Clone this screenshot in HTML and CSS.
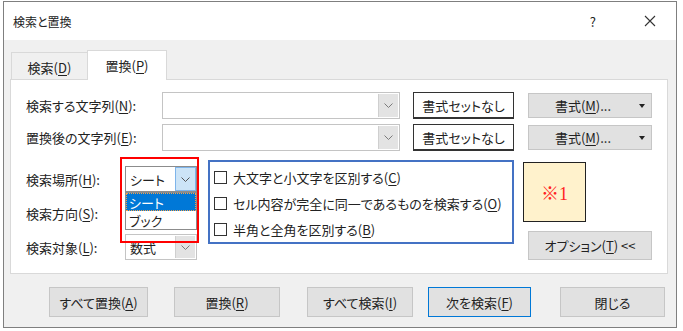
FILE: index.html
```html
<!DOCTYPE html>
<html lang="ja">
<head>
  <meta charset="UTF-8" />
  <title>検索と置換</title>
  <link rel="stylesheet" href="styles.css">
</head>
<body>
  <div class="window">
    <div class="titlebar">
      <span class="title">検索と置換</span>
      <span class="help">?</span>
      <svg class="close" width="12" height="12" viewBox="0 0 12 12"><path d="M1 1L11 11M11 1L1 11" stroke="#333" stroke-width="1.1" fill="none"/></svg>
    </div>
    <div class="body">
      <div class="tabs">
        <div class="tab">検索(<u>D</u>)</div>
        <div class="tab active">置換(<u>P</u>)</div>
      </div>
      <div class="panel">
        <div class="find-grid">
          <label>検索する文字列(<u>N</u>):</label>
          <div class="combo wide">
            <span class="value"></span>
            <span class="drop"><svg width="9" height="5" viewBox="0 0 9 5"><polyline points="0.5,0.5 4.5,4.5 8.5,0.5" stroke="#7a7a7a" fill="none"/></svg></span>
          </div>
          <div class="fmt-none">書式セットなし</div>
          <div class="btn fmt"><span>書式(<u>M</u>)...</span><span class="tri"></span></div>

          <label>置換後の文字列(<u>E</u>):</label>
          <div class="combo wide">
            <span class="value"></span>
            <span class="drop"><svg width="9" height="5" viewBox="0 0 9 5"><polyline points="0.5,0.5 4.5,4.5 8.5,0.5" stroke="#7a7a7a" fill="none"/></svg></span>
          </div>
          <div class="fmt-none">書式セットなし</div>
          <div class="btn fmt"><span>書式(<u>M</u>)...</span><span class="tri"></span></div>
        </div>

        <div class="opt-area">
          <div class="opt-form">
            <label>検索場所(<u>H</u>):</label>
            <div class="combo small open">
              <span class="value">シート</span>
              <span class="drop"><svg width="9" height="5" viewBox="0 0 9 5"><polyline points="0.5,0.5 4.5,4.5 8.5,0.5" stroke="#555" fill="none"/></svg></span>
            </div>
            <label>検索方向(<u>S</u>):</label>
            <div class="combo small">
              <span class="value"></span>
              <span class="drop"></span>
            </div>
            <label>検索対象(<u>L</u>):</label>
            <div class="combo small">
              <span class="value">数式</span>
              <span class="drop"><svg width="9" height="5" viewBox="0 0 9 5"><polyline points="0.5,0.5 4.5,4.5 8.5,0.5" stroke="#7a7a7a" fill="none"/></svg></span>
            </div>
          </div>

          <div class="checks">
            <div class="check"><span class="box"></span>大文字と小文字を区別する(<u>C</u>)</div>
            <div class="check"><span class="box"></span>セル内容が完全に同一であるものを検索する(<u>O</u>)</div>
            <div class="check"><span class="box"></span>半角と全角を区別する(<u>B</u>)</div>
          </div>

          <div class="side">
            <div class="note">※1</div>
            <div class="btn opts">オプション(<u>T</u>) &lt;&lt;</div>
          </div>

          <div class="dropdown-list">
            <div class="item selected">シート</div>
            <div class="item">ブック</div>
          </div>
          <div class="mark-red"></div>
        </div>
      </div>

      <div class="actions">
        <div class="btn act replace-all">すべて置換(<u>A</u>)</div>
        <div class="btn act replace">置換(<u>R</u>)</div>
        <div class="btn act find-all">すべて検索(<u>I</u>)</div>
        <div class="btn act find-next">次を検索(<u>F</u>)</div>
        <div class="btn act close-btn">閉じる</div>
      </div>
    </div>
  </div>
</body>
</html>
```

FILE: styles.css
```css
body {
  margin: 0;
  background: #fff;
  font-family: "Noto Sans CJK JP", "Noto Sans", sans-serif;
  font-feature-settings: "palt";
  font-size: 13px;
  color: #222;
}

u {
  text-underline-offset: 2px;
}

.window {
  margin: 1px 0 0 3px;
  width: 674px;
  height: 327px;
  box-sizing: border-box;
  border: 1px solid #7f7f7f;
  display: flex;
  flex-direction: column;
}

.titlebar {
  height: 38px;
  flex: none;
  background: #fff;
  display: flex;
  align-items: center;
  padding-left: 9px;
  font-size: 12px;
}

.help {
  margin-left: auto;
  margin-right: 48px;
  font-size: 13px;
}

.close {
  margin-right: 20px;
}

.body {
  flex: 1;
  background: #f0f0f0;
  padding: 10px 8px 0 6px;
}

.tabs {
  display: flex;
  align-items: flex-end;
  height: 29px;
  margin-left: 1px;
  position: relative;
  z-index: 1;
}

.tab {
  width: 77px;
  height: 27px;
  box-sizing: border-box;
  border: 1px solid #d9d9d9;
  border-bottom: none;
  display: flex;
  align-items: center;
  justify-content: center;
  padding-top: 2px;
}

.tab.active {
  width: 80px;
  height: 30px;
  margin-bottom: -1px;
  margin-left: -1px;
  background: #fff;
  padding-top: 0;
}

.panel {
  background: #fff;
  border: 1px solid #d9d9d9;
  height: 195px;
  box-sizing: border-box;
  padding: 12px 0 0 15px;
}

.find-grid {
  display: grid;
  grid-template-columns: 136px 238px 114px 138px;
  grid-auto-rows: 27px;
  row-gap: 5px;
  align-items: center;
}

.combo {
  height: 27px;
  box-sizing: border-box;
  background: #fff;
  border: 1px solid #c4c4c4;
  display: flex;
}

.combo .value {
  flex: 1;
  padding-left: 4px;
  display: flex;
  align-items: center;
}

.combo .drop {
  width: 19px;
  margin: 1px;
  background: #e3e3e3;
  border-left: 1px solid #cfcfcf;
  display: flex;
  align-items: center;
  justify-content: center;
}

.combo.small {
  width: 72px;
  height: 26px;
}

.combo.open {
  border-color: #8c8c8c;
}

.combo.open .drop {
  background: #cce4f7;
  border: 1px solid #7eb4ea;
  margin: 0;
}

.fmt-none {
  margin-left: 13px;
  height: 27px;
  box-sizing: border-box;
  border: 1px solid #333;
  border-bottom-width: 2px;
  display: flex;
  align-items: center;
  justify-content: center;
}

.btn {
  background: #e1e1e1;
  border: 1px solid #c6c6c6;
  box-sizing: border-box;
  display: flex;
  align-items: center;
  justify-content: center;
}

.fmt {
  margin-left: 14px;
  width: 124px;
  height: 25px;
  position: relative;
  padding-right: 14px;
}

.tri {
  position: absolute;
  right: 6px;
  top: 10px;
  border-left: 3.5px solid transparent;
  border-right: 3.5px solid transparent;
  border-top: 4px solid #222;
}

.opt-area {
  position: relative;
  display: flex;
  margin-top: 9px;
}

.opt-form {
  display: grid;
  grid-template-columns: 99px 72px;
  grid-auto-rows: 26px;
  row-gap: 8px;
  padding-top: 6px;
  align-items: center;
}

.checks {
  margin-left: 11px;
  width: 306px;
  height: 84px;
  box-sizing: border-box;
  border: 2px solid #4472c4;
  padding: 2px 0 0 4px;
  display: flex;
  flex-direction: column;
}

.check {
  flex: 1;
  display: flex;
  align-items: center;
}

.box {
  width: 13px;
  height: 13px;
  box-sizing: border-box;
  border: 1px solid #333;
  background: #fff;
  margin-right: 6px;
}

.side {
  margin-left: 9px;
  display: flex;
  flex-direction: column;
  align-items: flex-start;
}

.note {
  margin-top: 2px;
  width: 63px;
  height: 60px;
  box-sizing: border-box;
  border: 1px solid #222;
  background: #fff2cc;
  color: #f22;
  font-family: "Liberation Serif", "Noto Sans CJK JP", serif;
  font-size: 18px;
  display: flex;
  align-items: center;
  justify-content: center;
}

.opts {
  margin-top: 9px;
  margin-left: 5px;
  width: 124px;
  height: 29px;
}

.dropdown-list {
  position: absolute;
  left: 99px;
  top: 32px;
  width: 72px;
  height: 38px;
  box-sizing: border-box;
  background: #fff;
  border: 1px solid #8c8c8c;
}

.item {
  height: 18px;
  padding-left: 3px;
  display: flex;
  align-items: center;
}

.item.selected {
  background: #0078d7;
  color: #fff;
  outline: 1px dotted #f5a04a;
  outline-offset: -1px;
}

.mark-red {
  position: absolute;
  left: 94px;
  top: -3px;
  width: 79px;
  height: 86px;
  box-sizing: border-box;
  border: 2px solid #f00;
}

.actions {
  display: flex;
  margin-top: 13px;
  padding-left: 39px;
}

.act {
  height: 30px;
}

.replace-all { width: 99px; }
.replace { width: 106px; margin-left: 26px; }
.find-all { width: 106px; margin-left: 27px; }
.find-next { width: 103px; margin-left: 15px; border-color: #0078d7; }
.close-btn { width: 105px; margin-left: 29px; }
```
